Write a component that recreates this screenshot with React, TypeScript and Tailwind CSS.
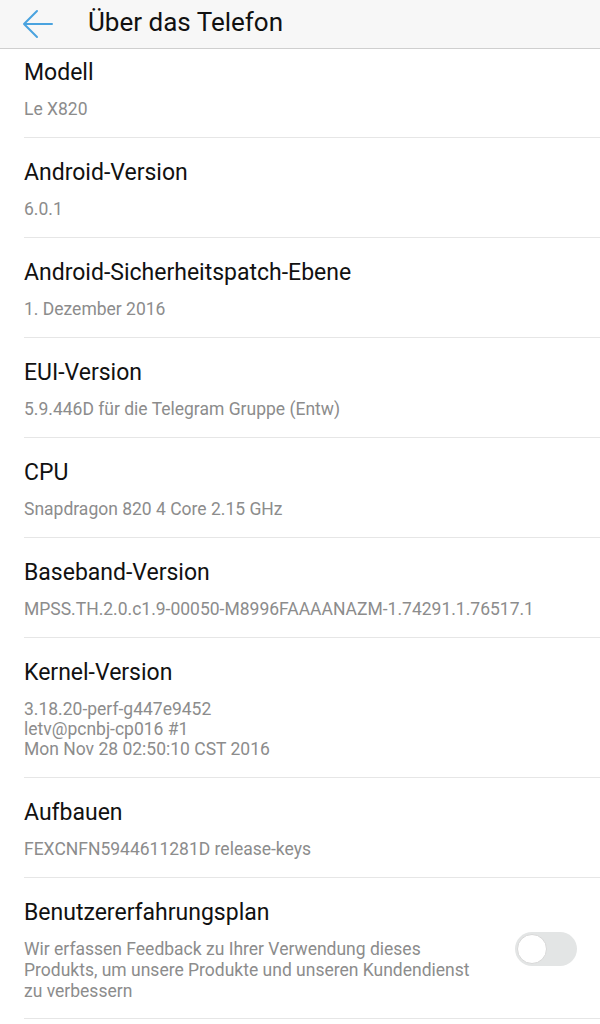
import React from 'react';

type Item = { title: string; lines: string[] };

const items: Item[] = [
  { title: 'Android-Version', lines: ['6.0.1'] },
  { title: 'Android-Sicherheitspatch-Ebene', lines: ['1. Dezember 2016'] },
  { title: 'EUI-Version', lines: ['5.9.446D für die Telegram Gruppe (Entw)'] },
  { title: 'CPU', lines: ['Snapdragon 820 4 Core 2.15 GHz'] },
  { title: 'Baseband-Version', lines: ['MPSS.TH.2.0.c1.9-00050-M8996FAAAANAZM-1.74291.1.76517.1'] },
  {
    title: 'Kernel-Version',
    lines: ['3.18.20-perf-g447e9452', 'letv@pcnbj-cp016 #1', 'Mon Nov 28 02:50:10 CST 2016'],
  },
  { title: 'Aufbauen', lines: ['FEXCNFN5944611281D release-keys'] },
];

const Row = ({ item, first }: { item: Item; first?: boolean }) => (
  <div className={`ml-6 border-b border-[#e6e6e6] pr-6 ${first ? 'pt-[9px]' : 'pt-5'} pb-[18px]`}>
    <div className="text-[23px] leading-[30px] text-[#111]">{item.title}</div>
    <div className="mt-[11px] text-[17.5px] leading-[20px] text-[#8c8c8c]">
      {item.lines.map((l) => (
        <div key={l}>{l}</div>
      ))}
    </div>
  </div>
);

export default function App() {
  return (
    <div className="w-[600px] h-[1024px] overflow-hidden bg-white" style={{ fontFamily: 'Roboto, "Noto Sans", sans-serif' }}>
      <div className="h-[49px] flex items-center bg-[#f7f7f7] border-b border-[#cfcfcf]">
        <div className="w-[88px] pl-[22px] flex items-center">
          <svg width="32" height="30" viewBox="0 0 32 30" fill="none" stroke="#4aa3df" strokeWidth="2" strokeLinecap="round" strokeLinejoin="round">
            <path d="M30 15H2M15 2 2 15l13 13" />
          </svg>
        </div>
        <div className="text-[26px] leading-none text-[#111] -mt-[5px]">Über das Telefon</div>
      </div>
      <Row item={{ title: 'Modell', lines: ['Le X820'] }} first />
      {items.map((it) => (
        <Row key={it.title} item={it} />
      ))}
      <div className="ml-6 border-b border-[#e6e6e6] pt-5 pb-4 flex items-start">
        <div className="flex-1">
          <div className="text-[23px] leading-[30px] text-[#111]">Benutzererfahrungsplan</div>
          <div className="mt-[11px] text-[17.5px] leading-[21px] text-[#8c8c8c] w-[452px]">
            Wir erfassen Feedback zu Ihrer Verwendung dieses Produkts, um unsere Produkte und unseren Kundendienst zu verbessern
          </div>
        </div>
        <div className="mt-[34px] mr-[23px] w-[62px] h-[34px] rounded-full bg-[#e3e5e5] p-[2px]">
          <div className="w-[30px] h-[30px] rounded-full bg-white border border-[#d8d8d8]" />
        </div>
      </div>
    </div>
  );
}
